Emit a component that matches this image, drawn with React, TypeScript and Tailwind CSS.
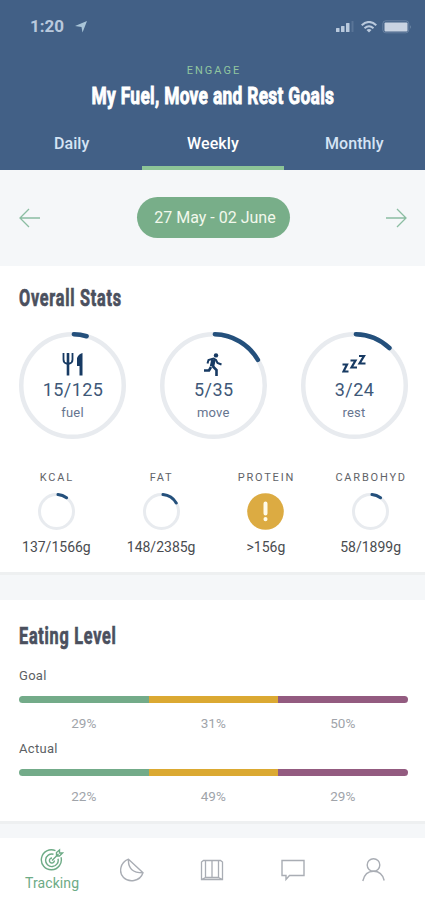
import type { ReactNode } from "react"

interface Goal {
  label: string
  value: string
  sweep: number
  icon: ReactNode
}

interface Nutrient {
  label: string
  value: string
  sweep?: number
}

const ForkKnife = () => (
  <svg className="w-6 h-6" viewBox="0 0 24 24" fill="none" stroke="#173a63" strokeWidth="2">
    <path d="M2.500 0v6.500q0 3.500 3 4h3q3-.5 3-4V0" strokeWidth="1.800" />
    <path d="M7 0v22.500" strokeWidth="2.600" />
    <path d="M21.500 0v22.500h-3V13h-2.500V5q1.500-4 5.500-5z" fill="#173a63" stroke="none" />
  </svg>
)

const Runner = () => (
  <svg className="w-6 h-6" viewBox="0 0 24 24" fill="none" stroke="#173a63" strokeWidth="2">
    <circle cx="15" cy="2.400" r="2.200" fill="#173a63" stroke="none" />
    <path d="M6.500 10.500l1-3.500 5-1.500 2.500 1.500 1.500 3 4 1.500" />
    <path d="M12.500 6.500l-1.500 7" strokeWidth="4.400" />
    <path d="M11.500 13l4 4V23" strokeWidth="2.600" />
    <path d="M10 14l-2 3.500H3" strokeWidth="2.600" />
  </svg>
)

const Zzz = () => (
  <svg className="w-6 h-6" viewBox="0 0 24 24" fill="none" stroke="#173a63" strokeWidth="2.200">
    <path d="M.5 11.500H5L1.500 18.500h5M8.500 7.500h5L9.500 14.500h5.500M17 3h5L17.500 10.500H23.500" />
  </svg>
)

const goals: Goal[] = [
  { label: "fuel", value: "15/125", sweep: 16, icon: <ForkKnife /> },
  { label: "move", value: "5/35", sweep: 60, icon: <Runner /> },
  { label: "rest", value: "3/24", sweep: 43, icon: <Zzz /> },
]

const nutrients: Nutrient[] = [
  { label: "KCAL", value: "137/1566g", sweep: 36 },
  { label: "FAT", value: "148/2385g", sweep: 60 },
  { label: "PROTEIN", value: ">156g" },
  { label: "CARBOHYD", value: "58/1899g", sweep: 36 },
]

const levels = [
  { label: "Goal", parts: ["29%", "31%", "50%"] },
  { label: "Actual", parts: ["22%", "49%", "29%"] },
]

function Ring({ size, stroke, start, sweep }: { size: number; stroke: number; start: number; sweep: number }) {
  const c = size / 2
  const r = c - stroke / 2
  const point = (deg: number) => {
    const a = (deg * Math.PI) / 180
    return `${c + r * Math.sin(a)} ${c - r * Math.cos(a)}`
  }

  return (
    <svg width={size} height={size} fill="none" strokeWidth={stroke}>
      <circle cx={c} cy={c} r={r} stroke="#e8ebef" />
      <path d={`M${point(start)} A${r} ${r} 0 0 1 ${point(sweep)}`} stroke="#24507c" strokeLinecap="round" />
    </svg>
  )
}

function StatusBar() {
  return (
    <div className="flex h-[53px] items-center justify-between pl-[30px] pr-[13px] text-[#b9c9dd]">
      <div className="flex items-center gap-[11px]">
        <span className="text-[17px] font-bold">1:20</span>
        <svg className="w-3 h-3" viewBox="0 0 12 12" fill="#a9c5d8">
          <path d="M12 0L7.500 11.500 6.500 6 0 5z" />
        </svg>
      </div>
      <div className="flex items-center gap-[5px]">
        <svg width="20" height="12" viewBox="0 0 20 12" fill="currentColor">
          <rect x="0" y="7" width="3.500" height="4" rx=".5" />
          <rect x="5" y="5" width="3.500" height="6" rx=".5" />
          <rect x="10" y="2" width="3.500" height="9" rx=".5" />
          <rect x="15.500" y="0" width="2" height="11" rx=".5" opacity=".2" />
        </svg>
        <svg width="16" height="12" viewBox="0 0 16 12" fill="none" stroke="currentColor" strokeWidth="2">
          <path d="M.7 4.200q7.300-6.500 14.600 0M3.500 7.200q4.500-4 9 0" />
          <path d="M5.500 9q2.500-2 5 0L8 11.500z" fill="currentColor" stroke="none" />
        </svg>
        <svg width="30" height="14" viewBox="0 0 30 14">
          <rect x=".8" y=".8" width="26" height="12" rx="3" fill="none" stroke="currentColor" opacity=".3" />
          <rect x="2.500" y="2.500" width="23" height="9" rx="1" fill="#c9d3e2" />
          <path d="M28 5q1.500 2 0 4z" fill="currentColor" opacity=".5" />
        </svg>
      </div>
    </div>
  )
}

function Heading({ children }: { children: ReactNode }) {
  return (
    <h2 className="h-6 w-[103px] whitespace-nowrap text-[23.5px] leading-6 font-bold text-[#4b505e]">
      <span className="inline-block origin-left scale-x-[0.69] tracking-[1.1px] [-webkit-text-stroke:0.7px_#4b505e]">
        {children}
      </span>
    </h2>
  )
}

export default function App() {
  return (
    <div className="flex h-[900px] w-[425px] flex-col overflow-hidden bg-[#f5f7f9] font-[Roboto,sans-serif]">
      <header className="h-[170px] bg-[#426086] text-white">
        <StatusBar />
        <div className="flex flex-col items-center">
          <div className="mt-[9px] h-[18px] pl-[3px] text-[11px] leading-[18px] tracking-[2px] text-[#91c6a0]">
            ENGAGE
          </div>
          <h1 className="mt-1 h-6 whitespace-nowrap text-[24.5px] leading-6 font-bold">
            <span className="inline-block scale-x-[0.71] tracking-[0.4px] [-webkit-text-stroke:0.9px_white]">
              My Fuel, Move and Rest Goals
            </span>
          </h1>
        </div>
        <nav className="mt-[9px] grid h-[53px] grid-cols-3 pl-px text-center text-[16px] leading-[54px] font-medium tracking-[0.1px] text-[#d5e4f5]">
          <div>Daily</div>
          <div className="h-[53px] border-b-4 border-[#8dc597] text-white">Weekly</div>
          <div>Monthly</div>
        </nav>
      </header>

      <div className="flex h-[95.5px] items-center justify-between pr-[18px] pl-[19px]">
        <svg width="21" height="20" viewBox="0 0 21 20" fill="none" stroke="#8bbda2" strokeWidth="1.300">
          <path d="M21 10H1M10 1L1 10l9 9" />
        </svg>
        <div className="ml-px flex h-[41px] w-[153px] items-center justify-center rounded-full bg-[#78ae89] pl-[3px] text-[16px] whitespace-nowrap text-[#f2f8ec]">
          27 May - 02 June
        </div>
        <svg width="21" height="20" viewBox="0 0 21 20" fill="none" stroke="#8bbda2" strokeWidth="1.300">
          <path d="M0 10h20M11 1l9 9-9 9" />
        </svg>
      </div>

      <section className="h-[306.5px] bg-white pt-[20.5px]">
        <div className="pl-[19px]">
          <Heading>Overall Stats</Heading>
        </div>

        <div className="mt-[21.5px] flex justify-between pr-[17.5px] pl-[19px]">
          {goals.map((goal) => (
            <div key={goal.label} className="grid h-[107px] w-[107px]">
              <div className="col-start-1 row-start-1">
                <Ring size={107} stroke={4.5} start={1.5} sweep={goal.sweep} />
              </div>
              <div className="col-start-1 row-start-1 flex flex-col items-center pt-[21px] text-[#3e5878]">
                {goal.icon}
                <div className="mt-[3px] h-5 pl-px text-[18px] leading-5 tracking-[0.4px]">{goal.value}</div>
                <div className="mt-[3px] h-5 text-[13px] leading-5 tracking-[0.2px] text-[#66758f]">{goal.label}</div>
              </div>
            </div>
          ))}
        </div>

        <div className="mt-[29.5px] grid grid-cols-4 pr-[2px] pl-[4px]">
          {nutrients.map((item) => (
            <div key={item.label} className="flex flex-col items-center">
              <div className="h-5 pl-px text-[11px] leading-5 tracking-[1.8px] whitespace-nowrap text-[#5f6368]">
                {item.label}
              </div>
              <div className="mt-[5px] h-[37px] w-[37px]">
                {item.sweep ? (
                  <Ring size={37} stroke={3} start={5} sweep={item.sweep} />
                ) : (
                  <svg width="37" height="37" viewBox="0 0 37 37">
                    <circle cx="18.500" cy="18.500" r="18.300" fill="#dcab42" />
                    <path d="M18.500 10.500v10M18.500 26v.2" stroke="#fffbe8" strokeWidth="4" strokeLinecap="round" />
                  </svg>
                )}
              </div>
              <div className="mt-[7px] h-5 text-[14px] leading-5 text-[#4a4c50]">{item.value}</div>
            </div>
          ))}
        </div>
      </section>
      <div className="h-[28px] border-t-[3px] border-[#eef0f1]" />

      <section className="h-[221px] bg-white pt-6 pr-[17.5px] pl-[19px]">
        <Heading>Eating Level</Heading>
        <div className="pt-[18px]">
          {levels.map((level) => (
            <div key={level.label} className="h-[72.5px]">
              <div className="h-5 text-[13px] leading-5 tracking-[0.3px] text-[#5c5f64]">{level.label}</div>
              <div className="mt-[10px] grid h-[7px] grid-cols-3 overflow-hidden rounded-full">
                <div className="bg-[#73ab89]" />
                <div className="bg-[#dba932]" />
                <div className="bg-[#935b80]" />
              </div>
              <div className="mt-[10px] grid h-5 grid-cols-3 text-center text-[13.5px] leading-5 text-[#a0a4aa]">
                {level.parts.map((part, i) => (
                  <span key={i}>{part}</span>
                ))}
              </div>
            </div>
          ))}
        </div>
      </section>
      <div className="h-[17px] border-t-[3px] border-[#eef0f1]" />

      <footer className="grid h-[62px] grid-cols-5 bg-white px-[12px] text-[#a9adb4]">
        <div className="flex flex-col items-center pt-[10px] text-[#6dab86]">
          <svg width="24" height="24" viewBox="0 0 24 24" fill="none" stroke="currentColor" strokeWidth="1.400">
            <path d="M15.500 2.700a10 10 0 1 0 5.500 6.500M13.500 6.200a6.300 6.300 0 1 0 4.500 4.500M12 10a2.500 2.500 0 1 0 2.400 2.500M12 12.500l6.500-6.500M16.500 7.500V4.500L19.500 2v3h3L19.500 8z" />
          </svg>
          <div className="mt-[1px] h-5 text-[14px] leading-5 tracking-[0.1px]">Tracking</div>
        </div>
        <div className="flex justify-center pt-5">
          <svg width="24" height="24" viewBox="0 0 24 24" fill="none" stroke="currentColor" strokeWidth="1.400">
            <path d="M8.500 1.200C0 4.500-1.500 14.500 3.500 19.500S20 24 23 14.800zM8.500 1.200q-1 13.600 14.500 13.600" />
          </svg>
        </div>
        <div className="flex justify-center pt-5">
          <svg width="24" height="24" viewBox="0 0 24 24" fill="none" stroke="currentColor" strokeWidth="1.300">
            <path d="M5.500 2.500h13v17h-13zM12 2.500v17M5.500 2.500H3.500L1.500 4v17.500h21V4l-2-1.500h-2M5.500 19.500l-4 2M18.500 19.500l4 2" />
          </svg>
        </div>
        <div className="flex justify-center pt-5">
          <svg width="24" height="24" viewBox="0 0 24 24" fill="none" stroke="currentColor" strokeWidth="1.400">
            <path d="M1 2.500h22v15H8.500L5 21.500v-4H1z" />
          </svg>
        </div>
        <div className="flex justify-center pt-5">
          <svg width="24" height="24" viewBox="0 0 24 24" fill="none" stroke="currentColor" strokeWidth="1.400">
            <circle cx="12.500" cy="7" r="6.300" />
            <path d="M1.800 23Q4 13.300 12.500 13.300T23.200 22.500" />
          </svg>
        </div>
      </footer>
    </div>
  )
}
